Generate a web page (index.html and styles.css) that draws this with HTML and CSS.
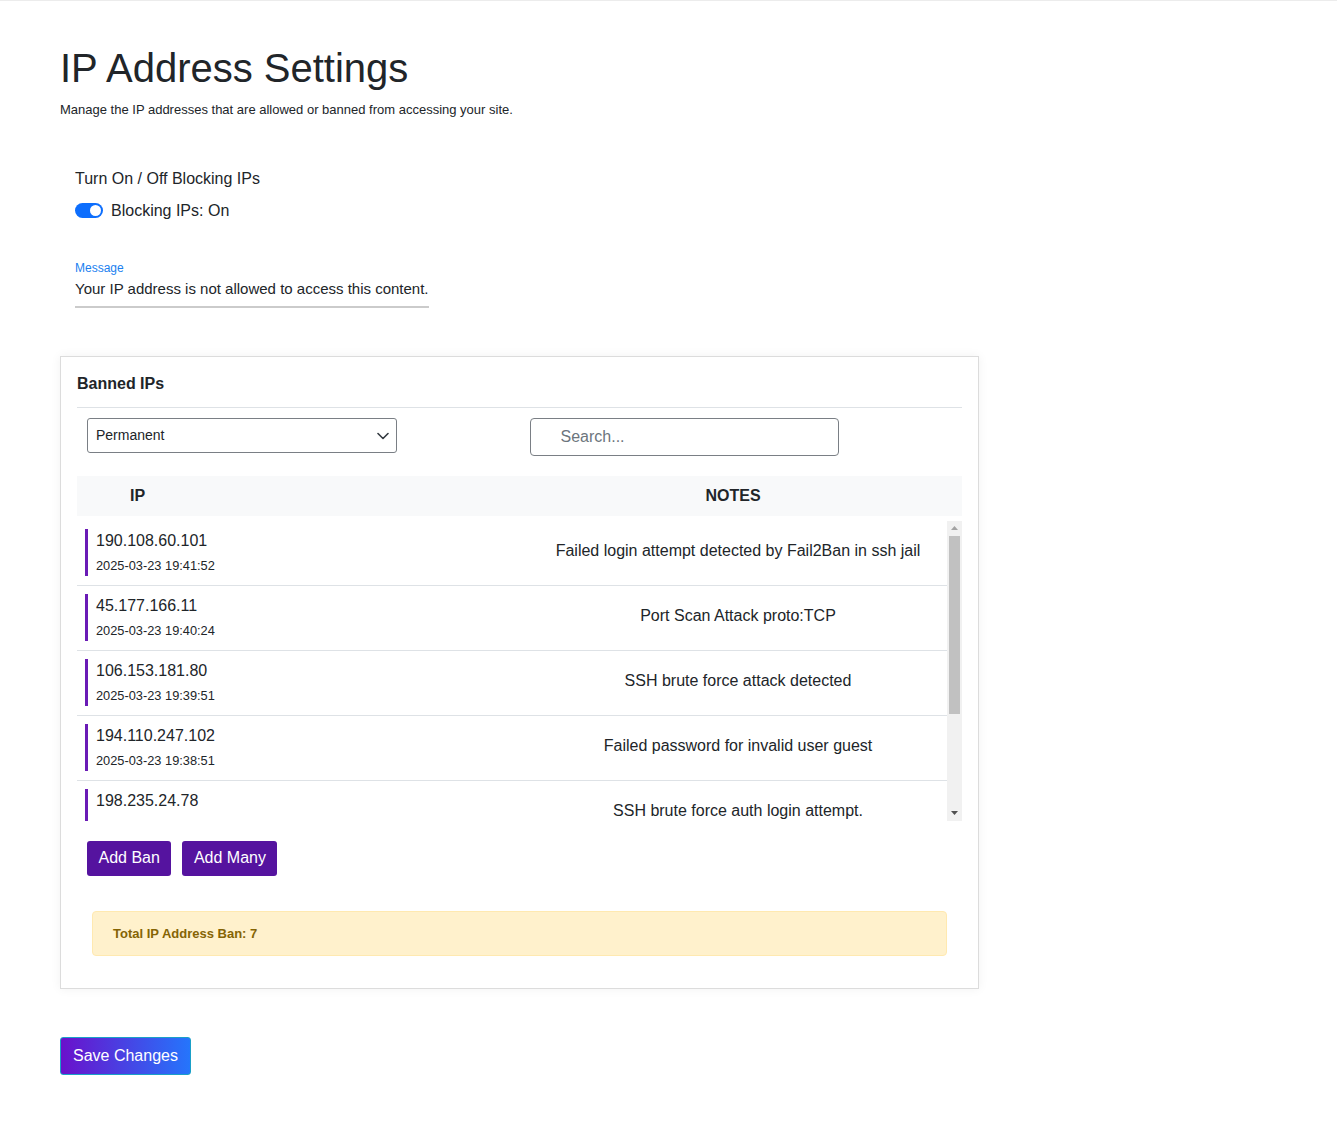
FILE: index.html
```html
<!DOCTYPE html>
<html lang="en">
<head>
<meta charset="utf-8">
<title>IP Address Settings</title>
<link rel="stylesheet" href="styles.css">
</head>
<body>
<div class="page">
  <h1 class="title">IP Address Settings</h1>
  <p class="subtitle">Manage the IP addresses that are allowed or banned from accessing your site.</p>

  <section class="blocking">
    <div class="blocking-label">Turn On / Off Blocking IPs</div>
    <label class="switch-row">
      <span class="switch"><span class="knob"></span></span>
      <span class="switch-text">Blocking IPs: On</span>
    </label>

    <div class="field">
      <div class="field-label">Message</div>
      <div class="field-input">Your IP address is not allowed to access this content.</div>
    </div>
  </section>

  <div class="card">
    <div class="card-title">Banned IPs</div>
    <div class="filters">
      <div class="filter-cell">
        <div class="select-wrap">
          <select class="select"><option>Permanent</option></select>
          <svg class="chevron" width="12" height="8" viewBox="0 0 12 8"><path d="M1 1.5l5 5 5-5" fill="none" stroke="#343a40" stroke-width="1.6" stroke-linecap="round" stroke-linejoin="round"/></svg>
        </div>
      </div>
      <div class="filter-cell">
        <input class="search" type="text" placeholder="Search...">
      </div>
    </div>

    <div class="thead">
      <div class="th th-ip">IP</div>
      <div class="th th-notes">NOTES</div>
    </div>

    <div class="tbody">
      <div class="rows">
        <div class="row">
          <div class="ip-cell"><div class="ip-block"><div class="ip">190.108.60.101</div><div class="date">2025-03-23 19:41:52</div></div></div>
          <div class="note">Failed login attempt detected by Fail2Ban in ssh jail</div>
        </div>
        <div class="row">
          <div class="ip-cell"><div class="ip-block"><div class="ip">45.177.166.11</div><div class="date">2025-03-23 19:40:24</div></div></div>
          <div class="note">Port Scan Attack proto:TCP</div>
        </div>
        <div class="row">
          <div class="ip-cell"><div class="ip-block"><div class="ip">106.153.181.80</div><div class="date">2025-03-23 19:39:51</div></div></div>
          <div class="note">SSH brute force attack detected</div>
        </div>
        <div class="row">
          <div class="ip-cell"><div class="ip-block"><div class="ip">194.110.247.102</div><div class="date">2025-03-23 19:38:51</div></div></div>
          <div class="note">Failed password for invalid user guest</div>
        </div>
        <div class="row">
          <div class="ip-cell"><div class="ip-block"><div class="ip">198.235.24.78</div><div class="date">2025-03-23 19:37:12</div></div></div>
          <div class="note">SSH brute force auth login attempt.</div>
        </div>
        <div class="row">
          <div class="ip-cell"><div class="ip-block"><div class="ip">103.145.13.209</div><div class="date">2025-03-23 19:35:40</div></div></div>
          <div class="note">Port Scan Attack proto:UDP</div>
        </div>
        <div class="row">
          <div class="ip-cell"><div class="ip-block"><div class="ip">185.224.128.17</div><div class="date">2025-03-23 19:33:05</div></div></div>
          <div class="note">Failed login attempt detected by Fail2Ban in ssh jail</div>
        </div>
      </div>
      <div class="scrollbar">
        <div class="sb-btn"><svg width="7" height="4" viewBox="0 0 7 4"><path d="M3.5 0L7 4H0z" fill="#a3a3a3"/></svg></div>
        <div class="sb-track"><div class="sb-thumb"></div></div>
        <div class="sb-btn"><svg width="7" height="4" viewBox="0 0 7 4"><path d="M0 0h7L3.5 4z" fill="#505050"/></svg></div>
      </div>
    </div>

    <div class="actions">
      <button class="btn-purple">Add Ban</button>
      <button class="btn-purple">Add Many</button>
    </div>

    <div class="alert">Total IP Address Ban: 7</div>
  </div>

  <button class="btn-save">Save Changes</button>
</div>
</body>
</html>
```

FILE: styles.css
```css
* { box-sizing: border-box; }

html, body {
  margin: 0;
  padding: 0;
  background: #fff;
}

body {
  border-top: 1px solid #ececec;
  font-family: "Liberation Sans", Arial, sans-serif;
  color: #212529;
}

.page {
  padding: 0 60px 60px;
}

.title {
  margin: 43px 0 8px;
  font-size: 40px;
  font-weight: 400;
  line-height: 48px;
  color: #212529;
}

.subtitle {
  margin: 0;
  font-size: 13px;
  line-height: 19.5px;
}

.blocking {
  padding: 47px 15px 0;
}

.blocking-label {
  font-size: 16px;
  line-height: 24px;
}

.switch-row {
  margin-top: 8px;
  display: flex;
  align-items: center;
  gap: 8px;
  font-size: 16px;
  line-height: 24px;
}

.switch {
  width: 28px;
  height: 15px;
  border-radius: 8px;
  background: #0d6efd;
  display: flex;
  align-items: center;
  justify-content: flex-end;
  padding: 0 2px;
}

.knob {
  width: 11px;
  height: 11px;
  border-radius: 50%;
  background: #fff;
}

.field {
  margin-top: 37px;
  width: fit-content;
}

.field-label {
  font-size: 12px;
  line-height: 16px;
  color: #1a7ff0;
}

.field-input {
  padding: 1px 0 6px;
  font-size: 15px;
  line-height: 23px;
  color: #212529;
  white-space: nowrap;
  border-bottom: 2px solid #cbcbcb;
}

.card {
  margin-top: 48px;
  width: 919px;
  border: 1px solid #dcdcdc;
  box-shadow: 0 0 10px rgba(0, 0, 0, 0.06);
  padding: 15px 16px 32px;
  background: #fff;
}

.card-title {
  font-size: 16px;
  font-weight: 700;
  line-height: 24px;
  padding-bottom: 11px;
  border-bottom: 1px solid #dee2e6;
}

.filters {
  display: grid;
  grid-template-columns: 1fr 1fr;
}

.filter-cell {
  padding: 10px;
}

.select-wrap {
  position: relative;
  width: 310px;
}

.select {
  appearance: none;
  -webkit-appearance: none;
  display: block;
  width: 100%;
  height: 35px;
  border: 1px solid #7a7f85;
  border-radius: 3px;
  background: #fff;
  font-family: "Liberation Sans", Arial, sans-serif;
  font-size: 14px;
  color: #212529;
  padding: 0 30px 0 8px;
}

.chevron {
  position: absolute;
  right: 8px;
  top: 14px;
}

.search {
  width: 309px;
  height: 38px;
  border: 1px solid #7a7f85;
  border-radius: 4px;
  padding: 0 12px 0 30px;
  font-family: "Liberation Sans", Arial, sans-serif;
  font-size: 16px;
  color: #212529;
  display: block;
}

.search::placeholder {
  color: #6c757d;
}

.thead {
  margin-top: 10px;
  display: grid;
  grid-template-columns: 427px 1fr;
  background: #f8f9fa;
  height: 40px;
  align-items: center;
  font-weight: 700;
  font-size: 16px;
  line-height: 24px;
}

.th-ip {
  padding-left: 53px;
}

.th-notes {
  text-align: center;
}

.tbody {
  margin-top: 5px;
  height: 300px;
  display: flex;
}

.rows {
  flex: 1;
  overflow: hidden;
}

.row {
  display: grid;
  grid-template-columns: 452px 1fr;
  align-items: center;
  border-bottom: 1px solid #dee2e6;
}

.ip-cell {
  padding: 8px 8px 9px;
}

.ip-block {
  border-left: 3px solid #6a1bb6;
  padding-left: 8px;
}

.ip {
  font-size: 16px;
  line-height: 24px;
}

.date {
  margin-top: 3px;
  font-size: 12.8px;
  line-height: 20px;
}

.note {
  text-align: center;
  font-size: 16px;
  line-height: 24px;
  padding: 0 8px 4px;
}

.scrollbar {
  width: 15px;
  background: #f1f1f1;
  display: flex;
  flex-direction: column;
}

.sb-btn {
  height: 15px;
  display: flex;
  align-items: center;
  justify-content: center;
}

.sb-track {
  flex: 1;
  padding: 0 2px;
}

.sb-thumb {
  height: 178px;
  background: #c1c1c1;
}

.actions {
  margin-top: 20px;
  padding-left: 10px;
  display: flex;
  gap: 11px;
}

.btn-purple {
  height: 35px;
  padding: 0 11.5px;
  border: 0;
  border-radius: 3px;
  background: #55139f;
  color: #fff;
  font-family: "Liberation Sans", Arial, sans-serif;
  font-size: 16px;
}

.alert {
  margin: 35px 15px 0;
  height: 45px;
  padding: 0 20px;
  display: flex;
  align-items: center;
  background: #fff1cc;
  border: 1px solid #ffe9b0;
  border-radius: 4px;
  color: #856404;
  font-size: 13px;
  font-weight: 700;
}

.btn-save {
  margin-top: 48px;
  height: 38px;
  padding: 0 12px;
  border: 1px solid #1aa0c8;
  border-radius: 3px;
  background: linear-gradient(90deg, #6a11cb 0%, #2575fc 100%);
  color: #fff;
  font-family: "Liberation Sans", Arial, sans-serif;
  font-size: 16px;
}
```
